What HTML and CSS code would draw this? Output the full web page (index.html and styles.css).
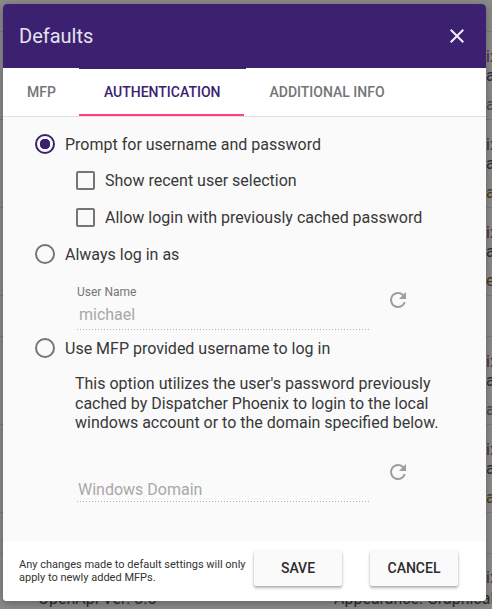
FILE: index.html
```html
<!DOCTYPE html>
<html lang="en">
<head>
<meta charset="utf-8">
<title>Defaults</title>
<link rel="stylesheet" href="styles.css">
</head>
<body>
<div class="page">
  <div class="band band-top"></div>
  <div class="row"><div class="edge plum">ix</div><div class="edge navy">a</div><div class="edge gap slate">a</div></div>
  <div class="row"><div class="edge plum">ix</div><div class="edge navy">a</div><div class="edge gap amber">ar</div></div>
  <div class="row"><div class="edge plum">ix</div><div class="edge navy">a</div><div class="edge gap amber">er</div></div>
  <div class="band band-mid"></div>
  <div class="row"><div class="edge plum">ix</div><div class="edge navy">a</div><div class="edge gap slate">a</div></div>
  <div class="row"><div class="edge plum">ix</div><div class="edge navy">a</div><div class="edge gap amber">ar</div></div>
  <div class="band band-mid"></div>
  <div class="row row-last">
    <div class="edge plum">ix</div>
    <div class="last-line"><span class="last-left">OpenApi Ver: 3.5</span><span class="last-right">Appearance: Graphical</span></div>
  </div>
</div>

<div class="dialog">
  <header class="dialog-head">
    <h1 class="dialog-title">Defaults</h1>
    <svg class="close-icon" viewBox="0 0 24 24" width="24" height="24"><path d="M19 6.41 17.59 5 12 10.59 6.41 5 5 6.41 10.59 12 5 17.59 6.41 19 12 13.41 17.59 19 19 17.59 13.41 12z"/></svg>
  </header>
  <nav class="tabs">
    <div class="tab tab-first">MFP</div>
    <div class="tab tab-active">AUTHENTICATION</div>
    <div class="tab">ADDITIONAL INFO</div>
  </nav>
  <main class="content">
    <div class="option option-first"><span class="radio radio-on"></span><span>Prompt for username and password</span></div>
    <div class="option option-sub"><span class="check"></span><span>Show recent user selection</span></div>
    <div class="option option-sub option-tall"><span class="check"></span><span>Allow login with previously cached password</span></div>
    <div class="option"><span class="radio"></span><span>Always log in as</span></div>
    <div class="field-row">
      <div class="field">
        <div class="field-label">User Name</div>
        <div class="field-value">michael</div>
      </div>
      <svg class="refresh-icon" viewBox="0 0 24 24" width="24" height="24"><path d="M17.65 6.35A7.95 7.95 0 0 0 12 4a8 8 0 1 0 7.73 10h-2.08A6 6 0 1 1 12 6c1.66 0 3.14.69 4.22 1.78L13 11h7V4z"/></svg>
    </div>
    <div class="option"><span class="radio"></span><span>Use MFP provided username to log in</span></div>
    <p class="explain">This option utilizes the user's password previously cached by Dispatcher Phoenix to login to the local windows account or to the domain specified below.</p>
    <div class="field-row">
      <div class="field">
        <div class="field-label"></div>
        <div class="field-value field-placeholder">Windows Domain</div>
      </div>
      <svg class="refresh-icon" viewBox="0 0 24 24" width="24" height="24"><path d="M17.65 6.35A7.95 7.95 0 0 0 12 4a8 8 0 1 0 7.73 10h-2.08A6 6 0 1 1 12 6c1.66 0 3.14.69 4.22 1.78L13 11h7V4z"/></svg>
    </div>
  </main>
  <footer class="dialog-foot">
    <p class="note">Any changes made to default settings will only apply to newly added MFPs.</p>
    <button class="btn btn-save">SAVE</button>
    <button class="btn btn-cancel">CANCEL</button>
  </footer>
</div>
</body>
</html>
```
FILE: styles.css
```css
* { box-sizing: border-box; }
html, body { margin: 0; height: 100%; }
body {
  position: relative;
  overflow: hidden;
  width: 492px;
  height: 609px;
  background: #8a8a89;
  font-family: Roboto, "Liberation Sans", sans-serif;
}
.page { display: flex; flex-direction: column; font-size: 16px; }
.band { border-bottom: 1px solid #7b7b7b; flex: none; }
.band-top { height: 32px; }
.band-mid { height: 41px; }
.row {
  flex: none;
  height: 88px;
  padding-top: 15px;
  border-bottom: 1px solid #7b7b7b;
}
.row-last { height: 60px; padding-top: 14px; border-bottom: 0; }
.edge { padding-left: 486px; line-height: 19px; white-space: nowrap; }
.gap { margin-top: 10px; }
.plum { color: #4a2a48; }
.navy { color: #2b2b45; }
.slate { color: #3a4a50; }
.amber { color: #4a3a20; }
.last-line { display: flex; line-height: 19px; margin-top: 2px; white-space: nowrap; color: #2c2c2c; }
.last-left { flex: none; margin-left: 38px; width: 296px; }
.last-right { flex: none; }

.dialog {
  position: absolute;
  left: 3px;
  top: 4px;
  width: 483px;
  height: 597px;
  display: flex;
  flex-direction: column;
  border-radius: 4px;
  overflow: hidden;
  background: #fff;
  box-shadow: 0 2px 8px rgba(0, 0, 0, .3);
}
.dialog-head {
  flex: none;
  height: 64px;
  padding: 0 17px 0 16px;
  display: flex;
  align-items: center;
  justify-content: space-between;
  background: #3b2170;
}
.dialog-title { margin: 0; font-size: 20px; font-weight: 400; color: #e6e1ee; }
.close-icon { fill: #f1eef6; }
.tabs {
  flex: none;
  height: 49px;
  display: flex;
  background: #fff;
  border-bottom: 1px solid #e0e0e0;
}
.tab {
  padding: 0 24px;
  height: 48px;
  line-height: 48px;
  font-size: 14px;
  font-weight: 500;
  color: #757575;
}
.tab-first { padding-right: 23px; }
.tab-active {
  padding-left: 25px;
  color: #3b2170;
  border-bottom: 2px solid #ff4081;
  position: relative;
}
.tab-active::before {
  content: "";
  position: absolute;
  left: 0;
  right: -2px;
  top: 0;
  height: 1px;
  background: #3b2170;
}
.tab-active + .tab { padding-left: 25px; }
.content { flex: 1; min-height: 0; padding: 9px 0 0 32px; background: #fafafa; }
.option {
  display: flex;
  align-items: center;
  height: 36px;
  font-size: 16px;
  color: #383838;
}
.option-sub { padding-left: 41px; }
.option-tall { height: 38px; }
.radio {
  flex: none;
  width: 20px;
  height: 20px;
  margin-right: 10px;
  border: 2px solid #757575;
  border-radius: 50%;
}
.radio-on {
  border-color: #3b2170;
  background: radial-gradient(circle, #3b2170 0 5px, transparent 5.5px);
}
.check {
  flex: none;
  width: 19px;
  height: 19px;
  margin-right: 10px;
  border: 2px solid #757575;
  border-radius: 2px;
}
.field-row { display: flex; align-items: flex-start; padding-left: 42px; }
.field {
  width: 294px;
  height: 58px;
  background-image: linear-gradient(to right, #b0b0b0 0 1px, transparent 1px);
  background-size: 3px 1px;
  background-repeat: repeat-x;
  background-position: left bottom 0;
}
.field-label { height: 27px; padding-top: 13px; font-size: 12px; line-height: 14px; color: #757575; }
.field-value {
  margin-top: 6px;
  padding-left: 2px;
  font-size: 16px;
  line-height: 20px;
  color: #a8a8a8;
}
.field-placeholder { margin-top: 9px; padding-left: 1px; }
.refresh-icon { flex: none; margin: 16px 0 0 15px; fill: #9e9e9e; }
.explain {
  margin: 8px 0 11px 40px;
  width: 372px;
  font-size: 16px;
  line-height: 19.5px;
  color: #383838;
}
.dialog-foot {
  flex: none;
  height: 59px;
  padding-left: 16px;
  display: flex;
  align-items: flex-start;
  background: #fff;
}
.note { margin: 16px 0 0; width: 235px; font-size: 11px; line-height: 13px; color: #333; }
.btn {
  flex: none;
  width: 88px;
  height: 35px;
  margin-top: 9px;
  padding-bottom: 2px;
  border: 0;
  border-radius: 2px;
  background: #fafafa;
  font-family: inherit;
  font-size: 14px;
  font-weight: 500;
  color: #2b2b2b;
  box-shadow: 0 2px 3px rgba(0, 0, 0, .3), 0 0 2px rgba(0, 0, 0, .1);
}
.btn-cancel { margin-left: 28px; }
```
